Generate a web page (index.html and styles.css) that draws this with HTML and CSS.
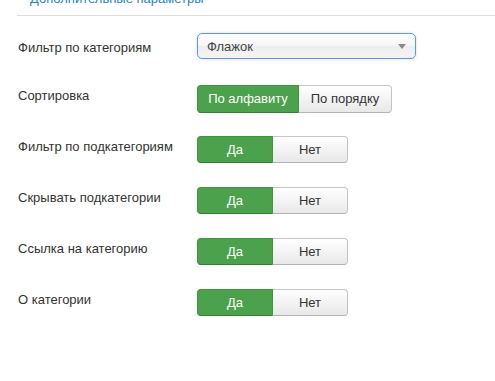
FILE: index.html
```html
<!DOCTYPE html>
<html>
<head>
<meta charset="utf-8">
<link rel="stylesheet" href="styles.css">
</head>
<body>
<div class="tabs">
  <span class="tab">Дополнительные параметры</span>
</div>
<div class="form">
  <div class="row row-select">
    <div class="label label-select">Фильтр по категориям</div>
    <div class="select">
      <span class="select-text">Флажок</span>
      <span class="arrow"></span>
    </div>
  </div>
  <div class="row">
    <div class="label">Сортировка</div>
    <div class="group">
      <span class="btn active btn-sort1">По алфавиту</span>
      <span class="btn btn-sort2">По порядку</span>
    </div>
  </div>
  <div class="row">
    <div class="label">Фильтр по подкатегориям</div>
    <div class="group">
      <span class="btn active yes">Да</span>
      <span class="btn no">Нет</span>
    </div>
  </div>
  <div class="row">
    <div class="label">Скрывать подкатегории</div>
    <div class="group">
      <span class="btn active yes">Да</span>
      <span class="btn no">Нет</span>
    </div>
  </div>
  <div class="row">
    <div class="label">Ссылка на категорию</div>
    <div class="group">
      <span class="btn active yes">Да</span>
      <span class="btn no">Нет</span>
    </div>
  </div>
  <div class="row">
    <div class="label">О категории</div>
    <div class="group">
      <span class="btn active yes">Да</span>
      <span class="btn no">Нет</span>
    </div>
  </div>
</div>
</body>
</html>
```

FILE: styles.css
```css
html, body {
  margin: 0;
  padding: 0;
  background: #fff;
}
body {
  font-family: "Liberation Sans", Arial, sans-serif;
  font-size: 13px;
  color: #333;
  width: 495px;
  height: 381px;
  overflow: hidden;
}
.tabs {
  display: flow-root;
  margin-left: 17px;
  height: 15px;
  border-bottom: 1px solid #dddddd;
}
.tab {
  display: block;
  margin-left: 13px;
  margin-top: -10px;
  line-height: 18px;
  color: #2a7fc9;
}
.form {
  display: flex;
  flex-direction: column;
  padding-top: 17px;
}
.row {
  display: flex;
  height: 51px;
  align-items: flex-start;
}
.row-select {
  height: 52px;
}
.label {
  width: 179px;
  padding-left: 18px;
  line-height: 18px;
  padding-top: 2px;
  color: #333;
}
.label-select {
  padding-top: 6px;
}
.select {
  box-sizing: border-box;
  width: 219px;
  height: 26px;
  border: 1px solid #5897fb;
  border-radius: 5px;
  background: linear-gradient(#ffffff 0%, #f6f6f6 50%, #eeeeee 52%, #f4f4f4 100%);
  box-shadow: 0 0 3px rgba(0,0,0,0.15);
  display: flex;
  align-items: center;
  justify-content: space-between;
  padding: 0 9px 0 9px;
  color: #444;
}
.arrow {
  width: 0;
  height: 0;
  border-left: 4px solid transparent;
  border-right: 4px solid transparent;
  border-top: 5px solid #888;
  margin-top: 1px;
}
.group {
  display: flex;
}
.btn {
  box-sizing: border-box;
  display: flex;
  align-items: center;
  justify-content: center;
  height: 27px;
  border: 1px solid #c5c5c5;
  border-bottom-color: #b3b3b3;
  background: linear-gradient(#ffffff, #e8e8e8);
  color: #333;
  line-height: 18px;
}
.btn:first-child {
  border-radius: 4px 0 0 4px;
}
.btn:last-child {
  border-radius: 0 4px 4px 0;
  border-left: none;
}
.btn.active {
  background: #4ca24c;
  border-color: #3f963f;
  border-bottom-color: #357f35;
  color: #fff;
}
.btn-sort1 {
  width: 102px;
  height: 28px;
}
.btn-sort2 {
  width: 93px;
  height: 28px;
}
.yes {
  width: 76px;
}
.no {
  width: 75px;
}
```
